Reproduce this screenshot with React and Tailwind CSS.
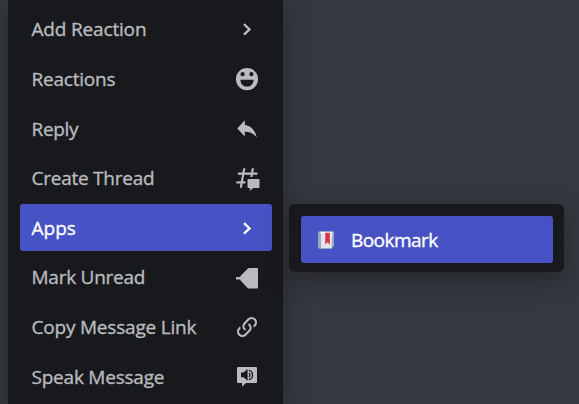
import React from "react";

function Icon({ children, viewBox = "0 0 24 24" }) {
  return (
    <svg className="h-[26px] w-[26px] shrink-0 overflow-visible" viewBox={viewBox} fill="currentColor">
      {children}
    </svg>
  );
}

const Chevron = () => (
  <Icon viewBox="0 0 26 26">
    <path d="M10 8.2 15.5 13.4 10 18.6" fill="none" stroke="currentColor" strokeWidth="2.3" />
  </Icon>
);

const Smile = () => (
  <Icon viewBox="0 0 26 26">
    <path
      fillRule="evenodd"
      d="M13 2a11.1 11.1 0 1 0 0 22.2A11.1 11.1 0 0 0 13 2ZM8.6 6.1a2.1 2.1 0 1 1 0 4.2 2.1 2.1 0 0 1 0-4.2Zm8.8 0a2.1 2.1 0 1 1 0 4.2 2.1 2.1 0 0 1 0-4.2ZM6.4 13.7h13.2c0 4-2.8 6.9-6.6 6.9s-6.6-2.9-6.6-6.9Z"
    />
  </Icon>
);

const Reply = () => (
  <Icon>
    <path d="M10 8.27V4L3 11.47l7 7.46v-4.37c5 0 8.5 1.7 11 5.44-1-5.33-4-10.67-11-11.73Z" />
  </Icon>
);

const Thread = () => (
  <Icon>
    <path d="M5.43309 21C5.35842 21 5.30189 20.9325 5.31494 20.859L5.99991 17H2.14274C2.06819 17 2.01168 16.9327 2.02453 16.8593L2.33253 15.0993C2.34258 15.0419 2.39244 15 2.45074 15H6.34991L7.40991 9H3.55274C3.47819 9 3.42168 8.93274 3.43453 8.85931L3.74253 7.09931C3.75258 7.04189 3.80244 7 3.86074 7H7.75991L8.45234 3.09903C8.46251 3.04174 8.51231 3 8.57049 3H10.3267C10.4014 3 10.4579 3.06746 10.4449 3.14097L9.75991 7H15.7599L16.4523 3.09903C16.4625 3.04174 16.5123 3 16.5705 3H18.3267C18.4014 3 18.4579 3.06746 18.4449 3.14097L17.7599 7H21.6171C21.6916 7 21.7481 7.06725 21.7353 7.14069L21.4273 8.90069C21.4172 8.95811 21.3674 9 21.3091 9H17.4099L17.0495 11.04H15.05L15.4104 9H9.41035L8.35035 15H10.5599V17H7.99991L7.30749 20.901C7.29732 20.9583 7.24752 21 7.18934 21H5.43309Z" />
    <path d="M13.4399 12.96C12.9097 12.96 12.4799 13.3898 12.4799 13.92V20.2213C12.4799 20.7515 12.9097 21.1813 13.4399 21.1813H14.3999C14.5325 21.1813 14.6399 21.2887 14.6399 21.4213V23.4597C14.6399 23.6677 14.8865 23.7773 15.0408 23.6378L17.4858 21.4289C17.6622 21.2695 17.8916 21.1813 18.1294 21.1813H22.5599C23.0901 21.1813 23.5199 20.7515 23.5199 20.2213V13.92C23.5199 13.3898 23.0901 12.96 22.5599 12.96H13.4399Z" />
  </Icon>
);

const Unread = () => (
  <Icon viewBox="0 0 26 26">
    <path d="M2 12.1h4.1c.3-.8.7-1.4 1.3-2l5.7-5.900c.7-.8 1.600-1.200 2.600-1.200H23a1 1 0 0 1 1 1v18.600a1 1 0 0 1-1 1h-7.300c-1 0-1.900-.4-2.600-1.200l-5.700-6c-.6-.6-1-1.200-1.300-2H2Z" />
  </Icon>
);

const Link = () => (
  <Icon>
    <path d="M10.59 13.41c.41.39.41 1.03 0 1.42-.39.39-1.03.39-1.42 0a5.003 5.003 0 0 1 0-7.07l3.54-3.54a5.003 5.003 0 0 1 7.07 0 5.003 5.003 0 0 1 0 7.07l-1.49 1.49c.01-.82-.12-1.64-.4-2.42l.47-.48a2.982 2.982 0 0 0 0-4.24 2.982 2.982 0 0 0-4.24 0l-3.53 3.53a2.982 2.982 0 0 0 0 4.24zm2.82-4.24c.39-.39 1.03-.39 1.42 0a5.003 5.003 0 0 1 0 7.07l-3.54 3.54a5.003 5.003 0 0 1-7.07 0 5.003 5.003 0 0 1 0-7.07l1.49-1.49c-.01.82.12 1.65.4 2.43l-.47.47a2.982 2.982 0 0 0 0 4.24 2.982 2.982 0 0 0 4.24 0l3.53-3.53a2.982 2.982 0 0 0 0-4.24.973.973 0 0 1 0-1.42z" />
  </Icon>
);

const Speak = () => (
  <Icon viewBox="0 0 26 26">
    <path d="M4.200 3h17.600A1.200 1.200 0 0 1 23 4.200v13.500a1.200 1.200 0 0 1-1.200 1.200H12l-4 3.800v-3.800H4.200A1.200 1.200 0 0 1 3 17.700V4.200A1.200 1.200 0 0 1 4.200 3Z" />
    <path d="M7 8.600h2.500L13.600 5.100v11.600L9.500 13.200H7Z" fill="#18191c" />
    <path d="M14.800 6.300a4.700 4.700 0 0 1 0 9.200M14.800 9a2.100 2.100 0 0 1 0 3.800" fill="none" stroke="#18191c" strokeWidth="1.300" />
  </Icon>
);

const Book = () => (
  <svg className="h-[18px] w-4 shrink-0" viewBox="0 0 16 18">
    <path d="M2.500 0H14q2 0 2 2v12.500L13.500 18H2.500Q0 18 0 15.500V2.500Q0 0 2.500 0Z" fill="#99a9bd" />
    <path d="M3 1h11.300v1.500L13.500 17H3Z" fill="#e1e6ed" />
    <path d="M2.200 1.200h12v1.100h-12Z" fill="#fff" />
    <path d="M7.300 1.800h4.500v12L9.500 11.300l-2.200 2.500Z" fill="#dd2e44" />
  </svg>
);

const items = [
  { label: "Add Reaction", icon: Chevron, tracking: "tracking-[-0.17px]" },
  { label: "Reactions", icon: Smile, tracking: "tracking-[-0.22px]" },
  { label: "Reply", icon: Reply, tracking: "tracking-[-0.3px]" },
  { label: "Create Thread", icon: Thread, tracking: "tracking-[-0.25px]" },
  { label: "Apps", icon: Chevron, active: true, tracking: "tracking-[0px]" },
  { label: "Mark Unread", icon: Unread, tracking: "tracking-[-0.25px]" },
  { label: "Copy Message Link", icon: Link, tracking: "tracking-[-0.2px]" },
  { label: "Speak Message", icon: Speak, tracking: "tracking-[-0.22px]" },
];

export default function App() {
  return (
    <div className="flex h-[404px] w-[579px] items-start overflow-hidden bg-[#35383f] pl-2 font-['Open_Sans','Noto_Sans',sans-serif] text-[19px] font-medium">
      <div className="flex h-[404px] w-[275px] shrink-0 flex-col gap-[2.67px] bg-[#18191c] pt-[5.2px] pr-[11px] pl-3 shadow-[0_8px_24px_rgba(0,0,0,0.3)]">
        {items.map(({ label, icon: Glyph, active, tracking }) => (
          <div
            key={label}
            className={`flex h-[47px] shrink-0 items-center justify-between rounded-[3px] pt-[1.5px] pr-3 pl-[11.5px] ${
              active ? "bg-[#4752c4] text-white" : "text-[#b9bbbe]"
            }`}
          >
            <span className={`whitespace-nowrap [-webkit-text-stroke:0.35px_currentColor] ${tracking}`}>{label}</span>
            <Glyph />
          </div>
        ))}
      </div>
      <div className="mt-[204px] ml-1.5 h-[68px] w-[275px] shrink-0 rounded-md bg-[#18191c] p-3 shadow-[0_8px_24px_rgba(0,0,0,0.3)]">
        <div className="flex h-[47px] w-[252px] items-center gap-[17px] rounded-[3px] bg-[#4752c4] pl-[17px] text-white">
          <Book />
          <span className="whitespace-nowrap pt-[2px] tracking-[-0.55px] [-webkit-text-stroke:0.35px_currentColor]">Bookmark</span>
        </div>
      </div>
    </div>
  );
}
